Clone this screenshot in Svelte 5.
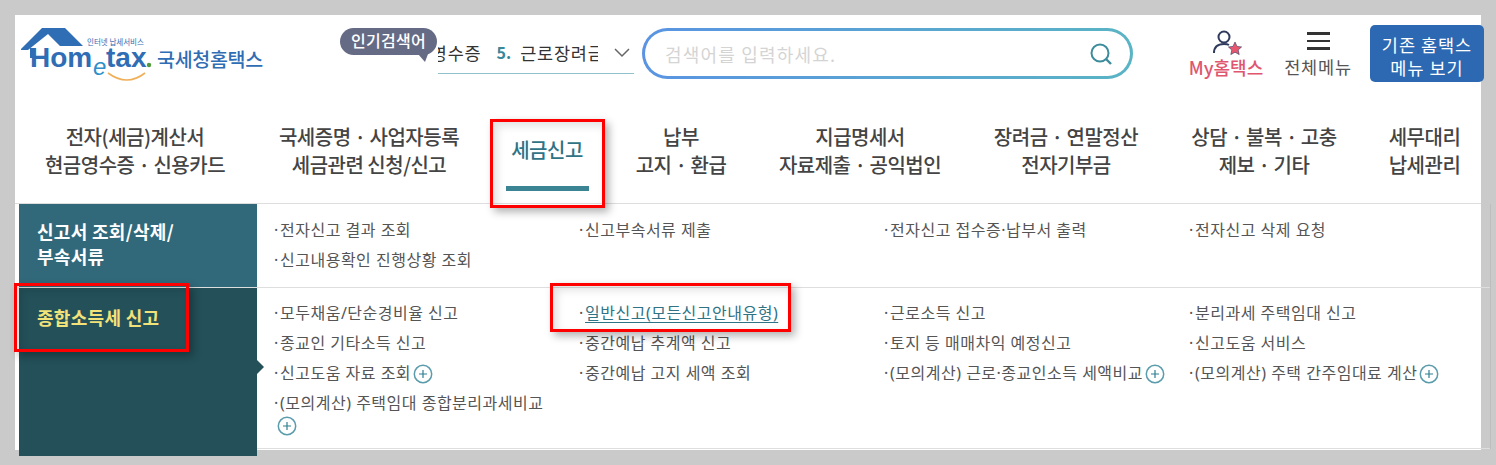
<script>
  const nav = [
    { w: 240, lines: ['전자(세금)계산서', '현금영수증 · 신용카드'] },
    { w: 228, lines: ['국세증명 · 사업자등록', '세금관련 신청/신고'] },
    { w: 128, lines: ['세금신고'], active: true },
    { w: 140, lines: ['납부', '고지 · 환급'] },
    { w: 218, lines: ['지급명세서', '자료제출 · 공익법인'] },
    { w: 194, lines: ['장려금 · 연말정산', '전자기부금'] },
    { w: 202, lines: ['상담 · 불복 · 고충', '제보 · 기타'] },
    { w: 119, lines: ['세무대리', '납세관리'] }
  ];

  const topItems = [
    { t: '전자신고 결과 조회' },
    { t: '신고부속서류 제출' },
    { t: '전자신고 접수증·납부서 출력' },
    { t: '전자신고 삭제 요청' },
    { t: '신고내용확인 진행상황 조회' }
  ];

  const mainItems = [
    { t: '모두채움/단순경비율 신고' },
    { t: '일반신고(모든신고안내유형)', link: true },
    { t: '근로소득 신고' },
    { t: '분리과세 주택임대 신고' },
    { t: '종교인 기타소득 신고' },
    { t: '중간예납 추계액 신고' },
    { t: '토지 등 매매차익 예정신고' },
    { t: '신고도움 서비스' },
    { t: '신고도움 자료 조회', plus: true },
    { t: '중간예납 고지 세액 조회' },
    { t: '(모의계산) 근로·종교인소득 세액비교', plus: true },
    { t: '(모의계산) 주택 간주임대료 계산', plus: true },
    { t: '(모의계산) 주택임대 종합분리과세비교', plus: true }
  ];
</script>

{#snippet menuItem(item)}
  <li class="item">
    <a class:link={item.link} href="#top">{item.t}</a>
    {#if item.plus}
      <svg class="plus" viewBox="0 0 20 20" width="20" height="20">
        <circle cx="10" cy="10" r="8.7" fill="#fff" stroke="#5a9cab" stroke-width="1.5" />
        <path d="M10 6v8M6 10h8" stroke="#2f7f92" stroke-width="1.2" />
      </svg>
    {/if}
  </li>
{/snippet}

<div class="page">
  <div class="sheet">
    <header class="top">
      <svg class="logo" viewBox="0 0 252 64" width="252" height="64">
        <path d="M6 27 27 6h23l18 18H45L33 12 13 28H6z" fill="#2f6db5" />
        <path d="M15 26h3v10h-3z" fill="#2f6db5" />
        <text x="15" y="45" class="logo-home">Hom</text>
        <text x="78" y="53" class="logo-e">e</text>
        <text x="91" y="45" class="logo-tax">tax</text>
        <circle cx="134" cy="43" r="2.2" fill="#4f9b3c" />
        <path d="M93 51q19 14 37 0" fill="none" stroke="#f0b05a" stroke-width="1.6" />
        <text x="72" y="23" class="logo-small">인터넷 납세서비스</text>
        <text x="142" y="45" class="logo-kr">국세청홈택스</text>
      </svg>

      <div class="ticker">
        <div class="ticker-clip">
          <span class="ticker-prev">현금영수증</span>
          <b>5.</b>
          <span>근로장려금</span>
        </div>
        <svg class="chev" viewBox="0 0 16 10" width="16" height="10">
          <path d="M1 1l7 7 7-7" fill="none" stroke="#666" stroke-width="1.5" />
        </svg>
        <div class="bubble">인기검색어</div>
      </div>

      <div class="search">
        <span class="ph">검색어를 입력하세요.</span>
        <svg viewBox="0 0 26 26" width="26" height="26">
          <circle cx="12" cy="12" r="8.5" fill="none" stroke="#3d8c9c" stroke-width="2" />
          <path d="M18 18l5 5" stroke="#3d8c9c" stroke-width="2.4" />
        </svg>
      </div>

      <div class="my">
        <svg viewBox="0 0 32 28" width="32" height="28">
          <circle cx="12" cy="8" r="5.5" fill="none" stroke="#2f3a5c" stroke-width="2" />
          <path d="M2 24c0-6 4-9 10-9 2 0 4 .4 5 1" fill="none" stroke="#2f3a5c" stroke-width="2" />
          <path d="M23 13l2 4.400 4.600.5-3.400 3.100 1 4.600-4.200-2.400-4.200 2.400 1-4.600-3.400-3.100 4.600-.5z" fill="#e8566f" stroke="#2f3a5c" stroke-width=".6" />
        </svg>
        <span>My홈택스</span>
      </div>

      <div class="all">
        <div class="burger"><i></i><i></i><i></i></div>
        <span>전체메뉴</span>
      </div>

      <div class="old">기존 홈택스<br />메뉴 보기</div>
    </header>

    <nav class="gnb">
      {#each nav as n}
        <div class="gnb-item" class:active={n.active} style="width:{n.w}px">
          {#each n.lines as line}
            <span>{line}</span>
          {/each}
        </div>
      {/each}
    </nav>

    <section class="menu">
      <div class="row row-a">
        <h3>신고서 조회/삭제/<br />부속서류</h3>
        <ul>
          {#each topItems as item}
            {@render menuItem(item)}
          {/each}
        </ul>
      </div>
      <div class="row row-b">
        <h3>종합소득세 신고</h3>
        <ul>
          {#each mainItems as item}
            {@render menuItem(item)}
          {/each}
        </ul>
      </div>
    </section>
  </div>

  <!-- red annotation boxes drawn over the capture -->
  <div class="mark mark-nav"></div>
  <div class="mark mark-side"></div>
  <div class="mark mark-link"></div>
</div>

<style>
  :global(body) {
    margin: 0;
    background: #cacaca;
  }

  .page {
    position: relative;
    width: 1496px;
    height: 465px;
    padding: 15px;
    box-sizing: border-box;
    overflow: hidden;
    background: #cacaca;
    font-family: "Noto Sans CJK KR", "Noto Sans", sans-serif;
    color: #444;
  }

  .sheet {
    width: 1466px;
    height: 435px;
    background: #fff;
  }

  .top {
    display: flex;
    align-items: flex-start;
    height: 92px;
  }

  .logo {
    margin-top: 7px;
    flex: none;
  }
  .logo-home,
  .logo-tax {
    font: 700 28px "Liberation Sans", sans-serif;
    fill: #2f6db5;
  }
  .logo-e {
    font: italic 400 24px "Liberation Sans", sans-serif;
    fill: #2f8fc9;
  }
  .logo-small {
    font-size: 7.500px;
    fill: #2f6db5;
  }
  .logo-kr {
    font-size: 19.500px;
    font-weight: 500;
    letter-spacing: -0.3px;
    fill: #2f6db5;
  }

  .ticker {
    position: relative;
    flex: none;
    display: flex;
    align-items: center;
    width: 196px;
    height: 41px;
    margin: 17px 0 0 171px;
    border-bottom: 1px solid #8fc1cb;
    font-size: 17.500px;
    color: #333;
  }
  .ticker-clip {
    display: flex;
    width: 160px;
    overflow: hidden;
    white-space: nowrap;
  }
  .ticker-clip span {
    flex: none;
    letter-spacing: 0.8px;
  }
  .ticker-prev {
    margin-left: -41px;
  }
  .ticker-clip b {
    flex: none;
    margin: 0 9px 0 15px;
    color: #3a8799;
    font-size: 16px;
    line-height: 25px;
  }
  .chev {
    margin-left: 16px;
  }
  .bubble {
    position: absolute;
    left: -98px;
    top: -4px;
    width: 97px;
    height: 27px;
    border-radius: 14px;
    background: #666b85;
    color: #fff;
    font-size: 16px;
    font-weight: 500;
    line-height: 25px;
    text-align: center;
    letter-spacing: 0.3px;
  }
  .bubble::after {
    content: "";
    position: absolute;
    right: 9px;
    bottom: -7px;
    border-top: 8px solid #666b85;
    border-left: 7px solid transparent;
    border-right: 3px solid transparent;
  }

  .search {
    flex: none;
    display: flex;
    align-items: center;
    justify-content: space-between;
    box-sizing: border-box;
    width: 491px;
    height: 51px;
    margin: 13px 0 0 8px;
    padding: 0 16px 0 20px;
    border: 3px solid transparent;
    border-radius: 26px;
    background: linear-gradient(#fff, #fff) padding-box,
      linear-gradient(90deg, #5a94e2, #59b4c4) border-box;
  }
  .ph {
    color: #d4d4d4;
    font-size: 18px;
    letter-spacing: 1.2px;
  }

  .my,
  .all {
    display: flex;
    flex-direction: column;
    align-items: center;
    flex: none;
    line-height: 20px;
    white-space: nowrap;
  }
  .my {
    width: 78px;
    margin: 14px 0 0 54px;
    color: #e0566e;
    font-size: 18px;
    font-weight: 500;
  }
  .my svg {
    margin-left: 3px;
  }
  .all {
    width: 70px;
    margin: 17px 0 0 18px;
    color: #555;
    font-size: 17.500px;
    letter-spacing: 0.8px;
  }
  .burger {
    display: flex;
    flex-direction: column;
    gap: 5px;
    width: 23px;
    margin-bottom: 7px;
  }
  .burger i {
    display: block;
    height: 2.500px;
    background: #333;
  }
  .old {
    flex: none;
    box-sizing: border-box;
    width: 114px;
    height: 57px;
    margin: 10px 0 0 17px;
    padding-top: 8px;
    border-radius: 5px;
    background: #2d69b2;
    color: #fff;
    font-size: 17.500px;
    line-height: 23px;
    letter-spacing: 1px;
    text-align: center;
  }

  .gnb {
    display: flex;
    height: 97px;
    box-sizing: border-box;
    border-bottom: 1px solid #dedede;
  }
  .gnb-item {
    flex: none;
    display: flex;
    flex-direction: column;
    align-items: center;
    padding-top: 16px;
    box-sizing: border-box;
    color: #444;
    font-size: 20px;
    font-weight: 500;
    line-height: 28px;
    letter-spacing: -0.5px;
    white-space: nowrap;
  }
  .gnb-item.active {
    color: #2f7385;
    padding-top: 29px;
  }
  .gnb-item.active::after {
    content: "";
    width: 83px;
    height: 5px;
    margin-top: 22px;
    background: #3a8494;
  }

  .menu {
    width: 1471px;
    margin-left: 4px;
    border-right: 1px solid #bdbdbd;
  }
  .row {
    display: flex;
    border-bottom: 1px solid #dedede;
  }
  .row-a {
    height: 83px;
  }
  .row-b {
    position: relative;
    height: 160px;
  }
  h3 {
    flex: none;
    box-sizing: border-box;
    width: 238px;
    margin: 0;
    padding: 15px 0 0 18px;
    background: #31697a;
    color: #fff;
    font-size: 18px;
    font-weight: 700;
    line-height: 25px;
    letter-spacing: 0.3px;
  }
  .row-b h3 {
    height: 168px;
    padding-top: 17px;
    background: #235059;
    color: #f2e27a;
  }
  .row-b::before {
    content: "";
    position: absolute;
    left: 238px;
    top: 72px;
    border-left: 7px solid #235059;
    border-top: 7px solid transparent;
    border-bottom: 7px solid transparent;
  }
  ul {
    display: grid;
    grid-template-columns: repeat(4, 305px);
    grid-auto-rows: min-content;
    margin: 0;
    padding: 11px 0 0 16px;
    list-style: none;
    font-family: "Noto Sans", "Noto Sans CJK KR", sans-serif;
    font-size: 16px;
    letter-spacing: 0.5px;
    color: #555;
  }
  .row-b ul {
    padding-top: 10px;
  }
  .item {
    position: relative;
    box-sizing: border-box;
    padding: 4px 13px 4px 7px;
    line-height: 22px;
  }
  .item::before {
    content: "·";
    position: absolute;
    left: 1px;
    color: #555;
  }
  .item a {
    color: inherit;
    text-decoration: none;
  }
  .item a.link {
    color: #2f7385;
    text-decoration: underline;
    text-underline-offset: 3px;
  }
  .plus {
    vertical-align: -5px;
    margin: -2px 0 0 -3px;
  }

  .mark {
    position: absolute;
    box-sizing: border-box;
    border: 3px solid #f00;
    box-shadow: 4px 4px 8px rgba(0, 0, 0, 0.3), inset 4px 4px 8px rgba(0, 0, 0, 0.12);
  }
  .mark-nav {
    left: 490px;
    top: 119px;
    width: 115px;
    height: 89px;
  }
  .mark-side {
    left: 14px;
    top: 283px;
    width: 175px;
    height: 69px;
  }
  .mark-link {
    left: 550px;
    top: 283px;
    width: 241px;
    height: 49px;
  }
</style>
